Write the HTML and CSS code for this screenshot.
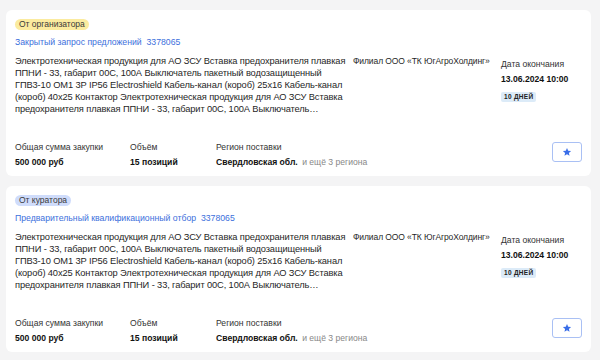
FILE: index.html
```html
<!DOCTYPE html>
<html lang="ru">
<head>
    <meta charset="UTF-8">
    <meta name="viewport" content="width=device-width, initial-scale=1.0">
    <title>Закупки</title>
    <link rel="stylesheet" href="styles.css">
</head>
<body>
    <div class="list">
        <!-- Карточка 1 -->
        <div class="card">
            <span class="tag tag-org">От организатора</span>
            <a class="title" href="#">Закрытый запрос предложений&nbsp;&nbsp;3378065</a>

            <div class="card-body">
                <div class="desc">Электротехническая продукция для АО ЗСУ Вставка предохранителя плавкая ППНИ - 33, габарит 00С, 100А Выключатель пакетный водозащищенный ГПВ3-10 ОМ1 3Р IP56 Electroshield Кабель-канал (короб) 25х16 Кабель-канал (короб) 40х25 Контактор Электротехническая продукция для АО ЗСУ Вставка предохранителя плавкая ППНИ - 33, габарит 00С, 100А Выключатель пакетный водозащищенный</div>
                <div class="org">Филиал ООО «ТК ЮгАгроХолдинг»</div>
                <div class="deadline">
                    <div class="label">Дата окончания</div>
                    <div class="value">13.06.2024 10:00</div>
                    <span class="days">10 ДНЕЙ</span>
                </div>
            </div>

            <div class="card-footer">
                <div class="info info-sum">
                    <div class="label">Общая сумма закупки</div>
                    <div class="value">500 000 руб</div>
                </div>
                <div class="info info-vol">
                    <div class="label">Объём</div>
                    <div class="value">15 позиций</div>
                </div>
                <div class="info">
                    <div class="label">Регион поставки</div>
                    <div class="value">Свердловская обл. <span class="more">и ещё 3 региона</span></div>
                </div>
                <button class="fav" type="button">
                    <svg width="10" height="10" viewBox="0 0 24 24"><path d="M12 2.5l2.9 6.3 6.9.7-5.2 4.6 1.5 6.8L12 17.4l-6.1 3.5 1.5-6.8-5.2-4.6 6.9-.7z" fill="#3a6ee8"/></svg>
                </button>
            </div>
        </div>

        <!-- Карточка 2 -->
        <div class="card">
            <span class="tag tag-cur">От куратора</span>
            <a class="title" href="#">Предварительный квалификационный отбор&nbsp;&nbsp;3378065</a>

            <div class="card-body">
                <div class="desc">Электротехническая продукция для АО ЗСУ Вставка предохранителя плавкая ППНИ - 33, габарит 00С, 100А Выключатель пакетный водозащищенный ГПВ3-10 ОМ1 3Р IP56 Electroshield Кабель-канал (короб) 25х16 Кабель-канал (короб) 40х25 Контактор Электротехническая продукция для АО ЗСУ Вставка предохранителя плавкая ППНИ - 33, габарит 00С, 100А Выключатель пакетный водозащищенный</div>
                <div class="org">Филиал ООО «ТК ЮгАгроХолдинг»</div>
                <div class="deadline">
                    <div class="label">Дата окончания</div>
                    <div class="value">13.06.2024 10:00</div>
                    <span class="days">10 ДНЕЙ</span>
                </div>
            </div>

            <div class="card-footer">
                <div class="info info-sum">
                    <div class="label">Общая сумма закупки</div>
                    <div class="value">500 000 руб</div>
                </div>
                <div class="info info-vol">
                    <div class="label">Объём</div>
                    <div class="value">15 позиций</div>
                </div>
                <div class="info">
                    <div class="label">Регион поставки</div>
                    <div class="value">Свердловская обл. <span class="more">и ещё 3 региона</span></div>
                </div>
                <button class="fav" type="button">
                    <svg width="10" height="10" viewBox="0 0 24 24"><path d="M12 2.5l2.9 6.3 6.9.7-5.2 4.6 1.5 6.8L12 17.4l-6.1 3.5 1.5-6.8-5.2-4.6 6.9-.7z" fill="#3a6ee8"/></svg>
                </button>
            </div>
        </div>
    </div>
</body>
</html>
```

FILE: styles.css
```css
body {
    margin: 0;
    padding: 0;
    background: #f4f4f5;
    font-family: "Liberation Sans", Arial, sans-serif;
    color: #1f1f1f;
}

.list {
    display: flex;
    flex-direction: column;
    gap: 10px;
    padding: 10px 9px 0 6px;
}

.card {
    background: #fff;
    border-radius: 6px;
    height: 166px;
    box-sizing: border-box;
    padding: 9px 9px 0 9px;
    display: flex;
    flex-direction: column;
    align-items: flex-start;
}

.tag {
    font-size: 8.5px;
    line-height: 11px;
    padding: 0 4px;
    border-radius: 6px;
    color: #3a3a3a;
}

.tag-org {
    background: #fbeb9f;
}

.tag-cur {
    background: #cfdcfb;
}

.title {
    margin-top: 5px;
    font-size: 8.7px;
    line-height: 14px;
    color: #3c6fdc;
    text-decoration: none;
}

.card-body {
    display: flex;
    margin-top: 6px;
    width: 100%;
}

.desc {
    flex: 0 0 332px;
    margin-right: 6px;
    font-size: 9.3px;
    letter-spacing: -0.12px;
    line-height: 12px;
    display: -webkit-box;
    -webkit-line-clamp: 5;
    -webkit-box-orient: vertical;
    overflow: hidden;
}

.org {
    flex: 0 0 143px;
    margin-right: 5px;
    font-size: 8.5px;
    letter-spacing: -0.1px;
    line-height: 12px;
    white-space: nowrap;
}

.deadline {
    flex-shrink: 0;
    padding-top: 3px;
}

.label {
    font-size: 8.6px;
    line-height: 12px;
    color: #333;
}

.value {
    font-size: 8.6px;
    font-weight: bold;
    line-height: 12px;
    margin-top: 3px;
    color: #111;
}

.days {
    display: inline-block;
    margin-top: 4px;
    font-size: 6.5px;
    font-weight: bold;
    line-height: 10px;
    padding: 0 3px;
    border-radius: 2px;
    background: #dcebf8;
    color: #222;
    letter-spacing: 0.3px;
}

.card-footer {
    display: flex;
    align-items: flex-start;
    width: 100%;
    margin-top: auto;
    margin-bottom: 8px;
}

.info-sum {
    width: 115px;
}

.info-vol {
    width: 86px;
}

.more {
    font-weight: normal;
    color: #888;
    margin-left: 2px;
}

.fav {
    margin-left: auto;
    margin-right: 0;
    margin-top: 1px;
    width: 30px;
    height: 20px;
    background: #fff;
    border: 1px solid #a9c0f4;
    border-radius: 3px;
    display: flex;
    align-items: center;
    justify-content: center;
    padding: 0;
    cursor: pointer;
}
```
